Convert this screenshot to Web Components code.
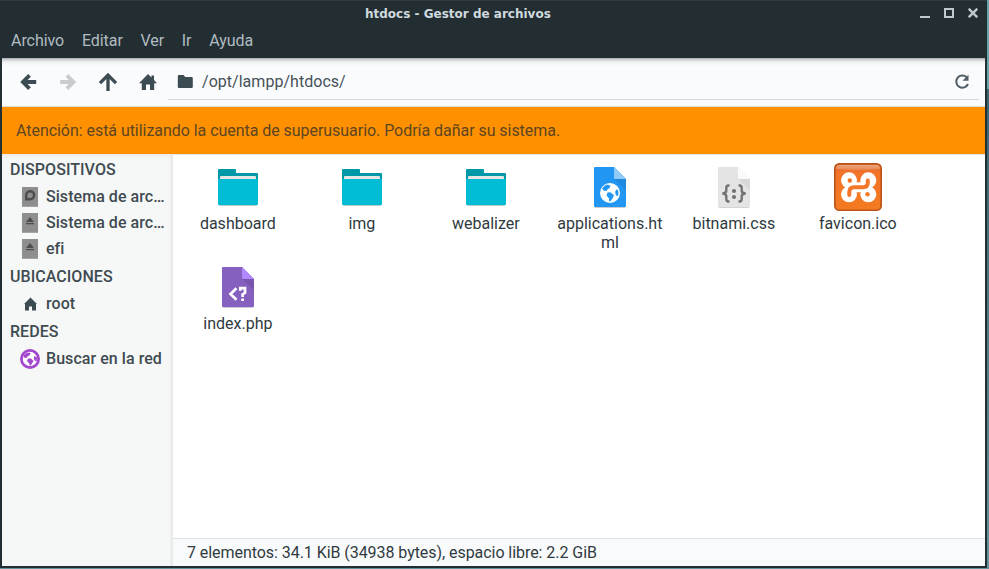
<!DOCTYPE html>
<html lang="es">
<head>
<meta charset="utf-8">
<title>htdocs - Gestor de archivos</title>
<style>
html,body{margin:0;height:569px;overflow:hidden;background:#5b8f98;font-family:Roboto,"Noto Sans",sans-serif;font-size:16px;color:#3b474e}
</style>
</head>
<body>
<fm-window></fm-window>
<script>
const define=(name,html)=>customElements.define(name,class extends HTMLElement{
  constructor(){super();const t=document.createElement('template');t.innerHTML=html;
    this.attachShadow({mode:'open'}).append(t.content.cloneNode(true));}
});

const globe='M12 2A10 10 0 1 0 12 22A10 10 0 1 0 12 2ZM9 3.5L12.5 4.8L11.6 7L9.8 8L8.6 10L5.5 9.4L4.2 7.6Q6 4.4 9 3.5ZM19.4 8.5Q21.5 12 19.6 15.2L17.8 14L17.2 11L18 8.7ZM9.6 11.5L12.4 11.2L16 14.3L14.8 17L12.5 20.3L11.2 20.4L11 17.4L8.5 14.2Z';
const icons={
 folder:[16,14,'<path d="M2 0H6.6L8.2 2H14.6Q15.8 2 15.8 3.2V12Q15.8 13 14.6 13H2Q.8 13 .8 12V1.2Q.8 0 2 0Z" fill="#3d4b53"/>'],
 left:[18,18,'<path d="M16.2 9H4M9.5 2.3L2.9 9L9.5 15.7" fill="none" stroke="#3d4b53" stroke-width="3.8"/>'],
 right:[18,18,'<path d="M1.2 9H13.4M7.9 2.3L14.5 9L7.9 15.7" fill="none" stroke="#c9cbcd" stroke-width="3.8"/>'],
 up:[20,20,'<path d="M10 19V3M2 11.2L10 3.2L18 11.2" fill="none" stroke="#3d4b53" stroke-width="3.3"/>'],
 home:[18,18,'<path d="M9 1L12.5 4.5V2.5H15V7L18 10.2H15.2V17H11V11.5H7V17H2.8V10.2H0Z" fill="#3d4b53"/>'],
 smallhome:[20,20,'<path d="M10.5 3.4L17 10H16V16.4H12V12.4H9V16.4H5V10H4Z" fill="#3d4b53"/>'],
 reload:[16,16,'<path d="M12.6 3.2A6.1 6.1 0 1 0 14 10" fill="none" stroke="#515d64" stroke-width="2"/><path d="M14.5 .8V6.8H8.5Z" fill="#515d64"/>'],
 min:[10,10,'<path d="M0 9H10" stroke="#bdc9ce" stroke-width="2"/>'],
 max:[10,10,'<path d="M1 1H9V9H1Z" fill="none" stroke="#bdc9ce" stroke-width="2"/>'],
 close:[10,10,'<path d="M.7 .7L9.3 9.3M9.3 .7L.7 9.3" stroke="#bdc9ce" stroke-width="2.4"/>'],
 disk:[20,20,'<path d="M2 0H18V20H2Z" fill="#8e8e8e"/><path d="M6.2 12.2V8.5A4 4 0 1 1 10 12.2Z" fill="none" stroke="#4d4d4d" stroke-width="2.4"/><path d="M2 19.5H18" stroke="#a5a5a5"/>'],
 eject:[20,20,'<path d="M2 0H18V20H2Z" fill="#8e8e8e"/><path d="M10 4L14 9H6ZM6 10H14V11.2H6Z" fill="#4d4d4d"/><path d="M2 19.5H18" stroke="#a5a5a5"/>'],
 net:[20,20,'<circle cx="10" cy="10" r="8.6" fill="#fff" stroke="#a347cf" stroke-width="2.8"/><path d="M4 6L7.6 3.5L10.5 4L9.6 6.3L7.7 7.3L6.5 9L3.8 8.5ZM14.5 7L17 8.5L16.7 12.5L14.5 11.5L13.8 9ZM8 9.6L11 9.5L13.6 12L12.3 14L10.7 16.4H9.5L9.3 14.5L7 12Z" fill="#a347cf"/>'],
 dir:[48,48,'<path d="M5 6H21Q22 6 22 7V10H43Q44 10 44 11V39H4V7Q4 6 5 6Z" fill="#0097a7"/><path d="M7 13H41Q42 13 42 14V20H6V14Q6 13 7 13Z" fill="#e6e6e6"/><path d="M4 17Q4 16 5 16H43Q44 16 44 17V41Q44 42 43 42H5Q4 42 4 41Z" fill="#00bcd4"/><path d="M5 42.5H43" stroke="#b8c9cc"/>'],
 html:[48,48,'<path d="M8.7 44.4H39.3" stroke="#c4c8cc"/><path d="M9 4H28L40 16V43Q40 44 39 44H9Q8 44 8 43V5Q8 4 9 4Z" fill="#2196f3"/><path d="M28 16H40V27Z" fill="#1f89de"/><path d="M28 4L40 16H29Q28 16 28 15Z" fill="#90caf9"/><path d="'+globe+'" fill="#fff" fill-rule="evenodd" transform="translate(12 18)"/>'],
 css:[48,48,'<path d="M8.7 44.4H39.3" stroke="#cfcfcf"/><path d="M9 4H28L40 16V43Q40 44 39 44H9Q8 44 8 43V5Q8 4 9 4Z" fill="#e4e4e4"/><path d="M28 16H40V27Z" fill="#d8d8d8"/><path d="M28 4L40 16H29Q28 16 28 15Z" fill="#fafafa"/><path d="M19.5 22.5H18.5Q16.3 22.5 16.3 25V27.5Q16.3 30.5 12.3 30.5Q16.3 30.5 16.3 33.5V36Q16.3 38.5 18.5 38.5H19.5M28.5 22.5H29.5Q31.7 22.5 31.7 25V27.5Q31.7 30.5 35.7 30.5Q31.7 30.5 31.7 33.5V36Q31.7 38.5 29.5 38.5H28.5" fill="none" stroke="#727272" stroke-width="2.4"/><circle cx="24" cy="28" r="2.1" fill="#727272"/><circle cx="24" cy="34" r="2.1" fill="#727272"/>'],
 php:[48,48,'<path d="M8.7 44.4H39.3" stroke="#c9c4cf"/><path d="M9 4H28L40 16V43Q40 44 39 44H9Q8 44 8 43V5Q8 4 9 4Z" fill="#8560be"/><path d="M28 16H40V27Z" fill="#7956ad"/><path d="M28 4L40 16H29Q28 16 28 15Z" fill="#b388ff"/><path d="M22.5 25.2L16.5 31L22.5 36.8M26.3 27.8V25.2H31V29.8L28.6 31.5V34M28.6 35.4V38" fill="none" stroke="#fff" stroke-width="2.7"/>'],
 xampp:[48,48,'<defs><linearGradient id="g" x2="0" y2="1"><stop stop-color="#d8662e"/><stop offset=".2" stop-color="#f3742a"/><stop offset="1" stop-color="#f47b20"/></linearGradient><linearGradient id="h" x2="0" y2="1"><stop stop-color="#e9a47d"/><stop offset="1" stop-color="#ed8450"/></linearGradient></defs><rect x=".8" y=".8" width="46.4" height="46.4" rx="4.5" fill="url(#g)" stroke="#bb5217" stroke-width="1.6"/><path d="M2 6Q2 2 6 2H42Q46 2 46 6Q24 8 2 6Z" fill="url(#h)"/><g fill="#fff"><circle cx="15" cy="17.3" r="8"/><circle cx="34.3" cy="17.3" r="8"/><circle cx="15" cy="31.3" r="8"/><circle cx="34.3" cy="31.3" r="8"/><path d="M11 19.3H38V29.3H11Z"/></g><path d="M15.3 32V29.5Q15.3 24.2 20 24.2H29Q33.8 24.2 33.8 19.5V17.5" fill="none" stroke="#f47629" stroke-width="4" stroke-linecap="round"/><circle cx="15.8" cy="17.5" r="2.2" fill="#f37328"/><circle cx="33.5" cy="31.2" r="2.2" fill="#f47a23"/>']
};
customElements.define('fm-icon',class extends HTMLElement{
  connectedCallback(){
    if(this.shadowRoot)return;
    const [w,h,body]=icons[this.getAttribute('name')];
    this.attachShadow({mode:'open'}).innerHTML=`<style>:host{display:block;flex:none;width:${w}px;height:${h}px}svg{display:block}</style><svg width="${w}" height="${h}" viewBox="0 0 ${w} ${h}">${body}</svg>`;
  }
});

define('fm-titlebar',`<style>
:host{display:grid;grid-template-columns:1fr 187px 1fr;align-items:center;height:27px;padding:0 7px 0 0;margin-left:-63px;box-sizing:border-box;font:bold 12px/27px "DejaVu Sans",sans-serif;color:#cfdadf}
.t{grid-column:2;white-space:nowrap;padding-top:1px}
.c{display:flex;gap:14px;justify-content:flex-end;padding-bottom:2px}
</style><span class="t"><slot></slot></span><div class="c"><fm-icon name="min"></fm-icon><fm-icon name="max"></fm-icon><fm-icon name="close"></fm-icon></div>`);

define('fm-menubar',`<style>
:host{display:flex;gap:17.7px;height:31px;padding:0 9px;line-height:28px;color:#b0bcc1;letter-spacing:-.05px}
</style><slot></slot>`);

define('fm-toolbar',`<style>
:host{display:flex;height:49px;box-sizing:border-box;background:linear-gradient(#aaadaf 0,#d5d7d9 2px,#eff1f3 4px,#fafbfd 8px);border-bottom:1px solid #dcdee0;padding:0 6px 0 18px}
.nav{display:flex;align-items:center;gap:21px;width:148px}
.path{flex:1;display:flex;align-items:center;box-sizing:border-box;height:42px;border-bottom:1px solid #d4d7d9;padding:6px 9px 0;color:#465158;line-height:20px}
.path span{flex:1;margin-left:9px;letter-spacing:.03px}
</style><div class="nav"><fm-icon name="left"></fm-icon><fm-icon name="right"></fm-icon><fm-icon name="up"></fm-icon><fm-icon name="home"></fm-icon></div><div class="path"><fm-icon name="folder"></fm-icon><span><slot></slot></span><fm-icon name="reload"></fm-icon></div>`);

define('fm-warning',`<style>
:host{display:block;height:47px;box-sizing:border-box;padding-left:14px;line-height:47px;background:#ff9100;color:#5d4521;letter-spacing:-.045px}
</style><slot></slot>`);

define('fm-sidebar',`<style>
:host{display:block;box-sizing:border-box;width:171px;padding-top:1px;background:linear-gradient(90deg,transparent 167px,#e5e7e6 171px),linear-gradient(#eaecec,#f6f8f7 5px);font-weight:500;color:#3f4b51;letter-spacing:.05px}
</style><slot></slot>`);
define('fm-heading',`<style>:host{display:block;height:29px;line-height:30px;padding-left:8px}</style><slot></slot>`);
define('fm-place',`<style>
:host{display:flex;align-items:center;height:26px;padding-left:18px;gap:6px;line-height:26px}
span{width:124px;overflow:hidden;text-overflow:ellipsis;white-space:nowrap}
</style><slot name="icon"></slot><span><slot></slot></span>`);

define('fm-files',`<style>
:host{display:grid;grid-template-columns:repeat(6,124px);grid-auto-rows:100px;align-content:start;padding:8px 0 0 3px;background:#fff;border-top:1px solid #e7e7e7;box-sizing:border-box}
</style><slot></slot>`);
define('fm-file',`<style>
:host{display:flex;flex-direction:column;align-items:center;gap:3px;line-height:19px;color:#2f3a40}
span{width:108px;margin-left:-.3px;text-align:center;overflow-wrap:anywhere}
</style><slot name="icon"></slot><span><slot></slot></span>`);
define('fm-status',`<style>
:host{display:block;height:28px;box-sizing:border-box;border-top:1px solid #dfe2e3;background:#f9fafc;padding-left:14px;line-height:27px;color:#303b41;letter-spacing:-.055px}
</style><slot></slot>`);

define('fm-window',`<style>
:host{display:flex;height:569px;background:linear-gradient(#66a5a9 89px,#3b666f 89px,#62949b 569px)}
.win{width:987px;height:568px;box-sizing:border-box;padding:0 2px 2px;background:#232e33;border-top:1px solid #2d3b41;display:flex;flex-direction:column}
.body{display:grid;grid-template-columns:171px 1fr;flex:1;min-height:0}
.main{display:grid;grid-template-rows:1fr 28px}
fm-titlebar{margin-top:-1px}
</style>
<div class="win">
<fm-titlebar>htdocs - Gestor de archivos</fm-titlebar>
<fm-menubar><span>Archivo</span><span>Editar</span><span>Ver</span><span>Ir</span><span>Ayuda</span></fm-menubar>
<fm-toolbar>/opt/lampp/htdocs/</fm-toolbar>
<fm-warning>Atención: está utilizando la cuenta de superusuario. Podría dañar su sistema.</fm-warning>
<div class="body">
<fm-sidebar>
<fm-heading>DISPOSITIVOS</fm-heading>
<fm-place><fm-icon slot="icon" name="disk"></fm-icon>Sistema de arc…</fm-place>
<fm-place><fm-icon slot="icon" name="eject"></fm-icon>Sistema de arc…</fm-place>
<fm-place><fm-icon slot="icon" name="eject"></fm-icon>efi</fm-place>
<fm-heading>UBICACIONES</fm-heading>
<fm-place><fm-icon slot="icon" name="smallhome"></fm-icon>root</fm-place>
<fm-heading>REDES</fm-heading>
<fm-place><fm-icon slot="icon" name="net"></fm-icon>Buscar en la red</fm-place>
</fm-sidebar>
<div class="main">
<fm-files>
<fm-file><fm-icon slot="icon" name="dir"></fm-icon>dashboard</fm-file>
<fm-file><fm-icon slot="icon" name="dir"></fm-icon>img</fm-file>
<fm-file><fm-icon slot="icon" name="dir"></fm-icon>webalizer</fm-file>
<fm-file><fm-icon slot="icon" name="html"></fm-icon>applications.html</fm-file>
<fm-file><fm-icon slot="icon" name="css"></fm-icon>bitnami.css</fm-file>
<fm-file><fm-icon slot="icon" name="xampp"></fm-icon>favicon.ico</fm-file>
<fm-file><fm-icon slot="icon" name="php"></fm-icon>index.php</fm-file>
</fm-files>
<fm-status>7 elementos: 34.1 KiB (34938 bytes), espacio libre: 2.2 GiB</fm-status>
</div>
</div>
</div>`);
</script>
</body>
</html>
